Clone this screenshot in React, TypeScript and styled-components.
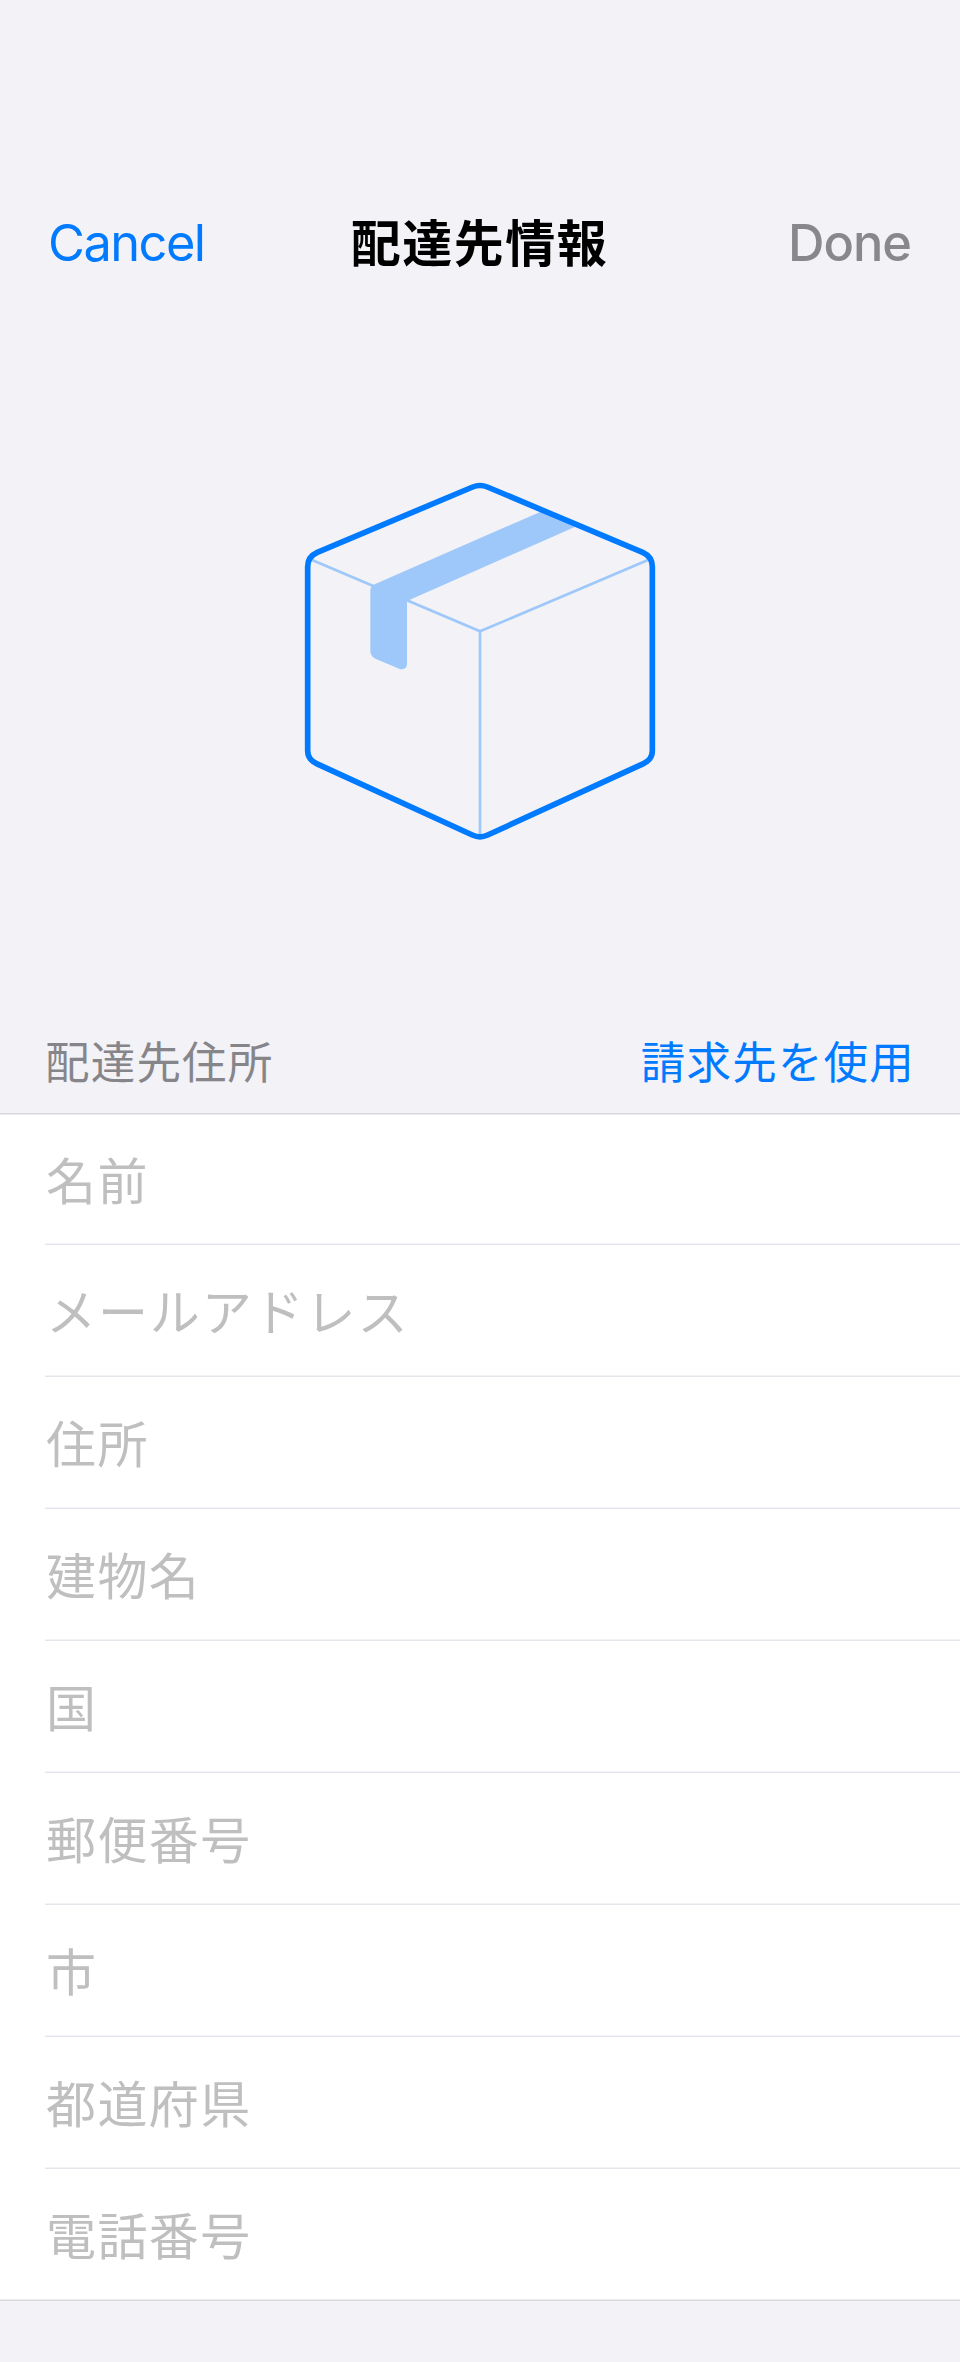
import React from "react";
import styled, { createGlobalStyle } from "styled-components";

const GlobalStyle = createGlobalStyle`
  * { box-sizing: border-box; }
  body { margin: 0; background: #f2f2f7; }
`;

const Screen = styled.main`
  width: 960px;
  height: 2362px;
  display: flex;
  flex-direction: column;
  background: #f2f2f7;
  font-family: Inter, "Noto Sans CJK JP", sans-serif;
`;

const NavBar = styled.header`
  display: grid;
  grid-template-columns: 1fr auto 1fr;
  align-items: center;
  height: 146px;
  margin-top: 170px;
  padding: 0 49px 0 48px;
`;

const NavButton = styled.button<{ $disabled?: boolean }>`
  border: 0;
  padding: 0;
  background: none;
  font: ${(p) => (p.$disabled ? 500 : 400)} 50.5px/60px Inter, sans-serif;
  letter-spacing: ${(p) => (p.$disabled ? "-1px" : "-1.5px")};
  color: ${(p) => (p.$disabled ? "#88878c" : "#007aff")};
  justify-self: ${(p) => (p.$disabled ? "end" : "start")};
`;

const Title = styled.h1`
  margin: 0;
  padding: 0 0 6px;
  font: 700 50px/72px "Noto Sans CJK JP", sans-serif;
  letter-spacing: 1.5px;
  color: #000;
`;

const Hero = styled.section`
  display: flex;
  justify-content: center;
  padding-top: 154px;
  height: 696px;
`;

const SectionHeader = styled.div`
  display: flex;
  justify-content: space-between;
  align-items: center;
  height: 101px;
  padding: 0 45px 5px 45px;
  font: 400 44.5px/66px "Noto Sans CJK JP", sans-serif;
  letter-spacing: 1.2px;
`;

const SectionTitle = styled.span`
  color: #86858a;
`;

const SectionLink = styled.span`
  color: #007aff;
`;

const FieldList = styled.ul`
  margin: 0;
  padding: 1px 0 1px 45px;
  list-style: none;
  background: #fff;
  border-top: 1px solid #d9d9dc;
  border-bottom: 1px solid #d9d8de;
  box-shadow: inset 0 1px #eaeaec, inset 0 -1px #eaeaed;
`;

const Field = styled.li<{ $kana?: boolean }>`
  display: flex;
  align-items: center;
  height: 132px;
  padding: 0 0 3px 1px;
  font: 400 50px/74px "Noto Sans CJK JP", sans-serif;
  letter-spacing: ${(p) => (p.$kana ? "1.9px" : "1.4px")};
  color: #bfbfbf;
  border-bottom: 1px solid #e6e5eb;
  box-shadow: inset 0 -1px #f3f3f6;

  &:first-child { height: 130px; }
  &:last-child { height: 130px; border-bottom: 0; box-shadow: none; }
`;

const fields = [
  { label: "名前" },
  { label: "メールアドレス", kana: true },
  { label: "住所" },
  { label: "建物名" },
  { label: "国" },
  { label: "郵便番号" },
  { label: "市" },
  { label: "都道府県" },
  { label: "電話番号" },
];

const PackageIcon = () => (
  <svg width="380" height="380" viewBox="0 0 1140 1140" fill="none">
    <g stroke="#9fc8fa" strokeWidth="8">
      <path d="M66 270L570 484L1074 270" />
      <path d="M570 484V1095" />
    </g>
    <path
      d="M752 125L254 343Q241 348 241 362V542Q241 559 258 567L329 597Q350 601 351 583V397Q352 393 358 390L856 170Z"
      fill="#9fc8fa"
    />
    <path
      d="M548 51Q570 42 592 51L1058 247Q1087 260 1087 290V842Q1087 867 1062 880L593 1095Q570 1106 547 1095L78 880Q53 867 53 842V290Q53 260 82 247Z"
      stroke="#007aff"
      strokeWidth="17"
    />
  </svg>
);

export default function App() {
  return (
    <Screen>
      <GlobalStyle />
      <NavBar>
        <NavButton>Cancel</NavButton>
        <Title>配達先情報</Title>
        <NavButton $disabled>Done</NavButton>
      </NavBar>
      <Hero>
        <PackageIcon />
      </Hero>
      <SectionHeader>
        <SectionTitle>配達先住所</SectionTitle>
        <SectionLink>請求先を使用</SectionLink>
      </SectionHeader>
      <FieldList>
        {fields.map(({ label, kana }) => (
          <Field key={label} $kana={kana}>
            {label}
          </Field>
        ))}
      </FieldList>
    </Screen>
  );
}
